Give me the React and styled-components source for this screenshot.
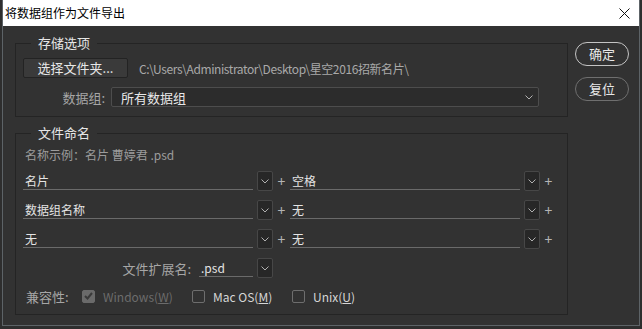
import React from "react";
import styled, { createGlobalStyle } from "styled-components";

const GlobalStyle = createGlobalStyle`
  html, body { margin: 0; padding: 0; background: #2e2e2e; }
  body { font-family: "Noto Sans CJK SC", "Noto Sans", sans-serif; }
  * { box-sizing: border-box; }
`;

const Window = styled.div`
  margin-left: 2px;
  width: 638px;
  height: 326px;
  border: 1px solid #5d6367;
  border-top: none;
  background: #323232;
  display: flex;
  flex-direction: column;
`;

const TitleBar = styled.div`
  height: 26px;
  flex: none;
  background: #ffffff;
  display: flex;
  align-items: center;
  justify-content: space-between;
  padding: 0 9px 0 2px;
`;

const Title = styled.span`
  font-size: 12px;
  color: #000;
  line-height: 16px;
`;

const Body = styled.div`
  display: flex;
  padding: 8px 0 0 12px;
`;

const LeftCol = styled.div`
  width: 553px;
  display: flex;
  flex-direction: column;
  gap: 7px;
`;

const Group = styled.fieldset`
  margin: 0;
  padding: 0 8px ${(p) => p.$pb}px 7px;
  border: 1px solid #242424;
  min-width: 0;
  display: flex;
  flex-direction: column;
`;

const Legend = styled.legend`
  margin-left: 8px;
  padding: 0 7px;
  font-size: 13px;
  line-height: 18px;
  color: #e6e6e6;
`;

const Row = styled.div`
  display: flex;
  align-items: center;
  height: 20px;
  margin-top: ${(p) => p.$mt || 0}px;
`;

const FolderButton = styled.button`
  width: 105px;
  height: 20px;
  padding: 0;
  background: #3a3a3a;
  border: 1px solid #232323;
  border-radius: 2px;
  color: #e8e8e8;
  font-family: inherit;
  font-size: 13px;
  line-height: 18px;
`;

const PathText = styled.span`
  margin-left: 11px;
  font-size: 12px;
  letter-spacing: -0.4px;
  color: #a9a9a9;
`;

const Label = styled.span`
  width: ${(p) => p.$w}px;
  flex: none;
  text-align: right;
  font-size: 13px;
  color: #a6a6a6;
  margin-right: ${(p) => p.$mr || 0}px;
`;

const Select = styled.div`
  width: 428px;
  height: 20px;
  background: #2c2c2c;
  border: 1px solid #4d4d4d;
  border-radius: 2px;
  display: flex;
  align-items: center;
  justify-content: space-between;
  padding: 0 5px 0 9px;
  font-size: 13px;
  color: #e8e8e8;
`;

const Sample = styled.div`
  margin: 5px 0 0 2px;
  font-size: 12px;
  line-height: 16px;
  color: #9c9c9c;
`;

const Field = styled.div`
  width: ${(p) => p.$w}px;
  height: 19px;
  align-self: flex-start;
  border-bottom: 1px solid #6a6a6a;
  padding: 2px 0 0 2px;
  font-size: 12px;
  line-height: 16px;
  color: #e4e4e4;
`;

const DropBox = styled.div`
  width: 16px;
  height: 20px;
  margin-left: 4px;
  flex: none;
  background: #272727;
  border: 1px solid #474747;
  border-radius: 2px;
  display: flex;
  align-items: center;
  justify-content: center;
`;

const Plus = styled.span`
  width: 17px;
  flex: none;
  text-align: center;
  font-size: 14px;
  line-height: 16px;
  color: #b4b4b4;
`;

const CompatLabel = styled.span`
  margin-left: 3px;
  width: 56px;
  flex: none;
  font-size: 13px;
  color: #a6a6a6;
`;

const CheckItem = styled.label`
  width: ${(p) => p.$w}px;
  flex: none;
  display: flex;
  align-items: center;
  gap: 8px;
  font-size: 12px;
  color: ${(p) => (p.$disabled ? "#6c6c6c" : "#d6d6d6")};
`;

const Box = styled.span`
  width: 13px;
  height: 13px;
  flex: none;
  border-radius: 2px;
  background: ${(p) => (p.$checked ? "#6a6a6a" : "transparent")};
  border: 1px solid ${(p) => (p.$checked ? "#6a6a6a" : "#6e6e6e")};
  display: flex;
  align-items: center;
  justify-content: center;
`;

const U = styled.span`
  text-decoration: underline;
`;

const RightCol = styled.div`
  margin-left: 7px;
  padding-top: 8px;
  display: flex;
  flex-direction: column;
  gap: 11px;
`;

const Pill = styled.button`
  width: 54px;
  height: 24px;
  padding: 0;
  border-radius: 12px;
  background: transparent;
  border: 1px solid ${(p) => (p.$primary ? "#c4c4c4" : "#6f6f6f")};
  color: #e8e8e8;
  font-family: inherit;
  font-size: 13px;
  line-height: 18px;
`;

const Chevron = () => (
  <svg width="8" height="5" viewBox="0 0 8 5">
    <path d="M0.5 0.5 L4 4 L7.5 0.5" fill="none" stroke="#b0b0b0" strokeWidth="1" />
  </svg>
);

const CloseIcon = () => (
  <svg width="11" height="11" viewBox="0 0 11 11">
    <path d="M0.5 0.5 L10.5 10.5 M10.5 0.5 L0.5 10.5" stroke="#111" strokeWidth="1" />
  </svg>
);

const Check = () => (
  <svg width="9" height="8" viewBox="0 0 9 8">
    <path d="M1 4 L3.5 6.5 L8 1" fill="none" stroke="#3a3a3a" strokeWidth="2" />
  </svg>
);

const NameRow = ({ a, b, mt }) => (
  <Row $mt={mt}>
    <Field $w={230}>{a}</Field>
    <DropBox><Chevron /></DropBox>
    <Plus>+</Plus>
    <Field $w={230}>{b}</Field>
    <DropBox><Chevron /></DropBox>
    <Plus>+</Plus>
  </Row>
);

export default function App() {
  return (
    <>
      <GlobalStyle />
      <Window>
        <TitleBar>
          <Title>将数据组作为文件导出</Title>
          <CloseIcon />
        </TitleBar>
        <Body>
          <LeftCol>
            <Group $pb={9}>
              <Legend>存储选项</Legend>
              <Row $mt={6}>
                <FolderButton>选择文件夹...</FolderButton>
                <PathText>C:\Users\Administrator\Desktop\星空2016招新名片\</PathText>
              </Row>
              <Row $mt={9}>
                <Label $w={82} $mr={6}>数据组:</Label>
                <Select>
                  <span>所有数据组</span>
                  <Chevron />
                </Select>
              </Row>
            </Group>
            <Group $pb={8}>
              <Legend>文件命名</Legend>
              <Sample>名称示例：名片 曹婷君 .psd</Sample>
              <NameRow a="名片" b="空格" mt={8} />
              <NameRow a="数据组名称" b="无" mt={9} />
              <NameRow a="无" b="无" mt={9} />
              <Row $mt={9}>
                <Label $w={168} $mr={8}>文件扩展名:</Label>
                <Field $w={54}>.psd</Field>
                <DropBox><Chevron /></DropBox>
              </Row>
              <Row $mt={8}>
                <CompatLabel>兼容性:</CompatLabel>
                <CheckItem $w={110} $disabled>
                  <Box $checked><Check /></Box>
                  <span>Windows(<U>W</U>)</span>
                </CheckItem>
                <CheckItem $w={100}>
                  <Box />
                  <span>Mac OS(<U>M</U>)</span>
                </CheckItem>
                <CheckItem $w={80}>
                  <Box />
                  <span>Unix(<U>U</U>)</span>
                </CheckItem>
              </Row>
            </Group>
          </LeftCol>
          <RightCol>
            <Pill $primary>确定</Pill>
            <Pill>复位</Pill>
          </RightCol>
        </Body>
      </Window>
    </>
  );
}
